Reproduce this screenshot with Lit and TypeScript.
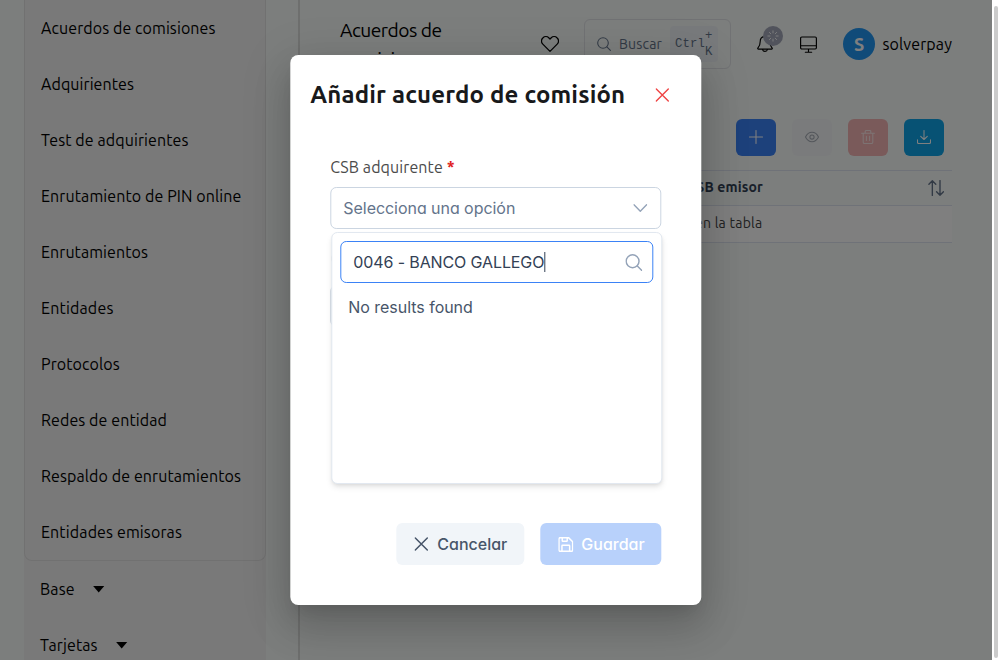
import { LitElement, html, css, svg } from "lit";
import { customElement, property } from "lit/decorators.js";

/* A one-line label that tracks its letters to fill a given width. */
@customElement("fit-label")
class FitLabel extends LitElement {
  @property({ type: Number }) width = 0;
  @property() text = "";
  static styles = css`
    :host { display: block; flex: none; white-space: nowrap; }
    .t { display: inline-block; white-space: pre; }
  `;
  firstUpdated() {
    const el = this.renderRoot.querySelector(".t") as HTMLElement;
    const w = el.getBoundingClientRect().width;
    if (w && this.width && Math.abs(this.width - w) > 0.4) {
      el.style.letterSpacing = `${(this.width - w) / this.text.length}px`;
    }
  }
  render() {
    return html`<span class="t">${this.text}</span>`;
  }
}

const fit = (text: string, width: number) =>
  html`<fit-label .text=${text} .width=${width}></fit-label>`;

const icons = {
  search: svg`<circle cx="6" cy="6" r="5.3"/><path d="M9.9 9.9 13.4 13.4"/>`,
  plus: svg`<path d="M7 .5v13M.5 7h13"/>`,
  eye: svg`<path d="M.5 7C2 4 4.4 2.3 7 2.3S12 4 13.5 7C12 10 9.6 11.7 7 11.7S2 10 .5 7Z"/><circle cx="7" cy="7" r="2.1"/>`,
  trash: svg`<path d="M.6 3.2h12.8M2.2 3.2v9.1c0 .7.5 1.2 1.2 1.2h7.2c.7 0 1.2-.5 1.2-1.2V3.2M4.2 3.2V1.4c0-.5.4-.9.9-.9h3.8c.5 0 .9.4.9.9v1.8M5.4 6.3v4.2M8.6 6.3v4.2"/>`,
  download: svg`<path d="M7 .5v9M3.7 6.3 7 9.5l3.3-3.2M.5 9.7v2.6c0 .7.6 1.2 1.2 1.2h10.6c.6 0 1.2-.5 1.2-1.2V9.7"/>`,
  times: svg`<path d="M1 1l12 12M13 1 1 13"/>`,
  save: svg`<path d="M.6 1.8C.6 1.1 1.1.6 1.8.6h7.7l3.9 3.9v7.7c0 .7-.5 1.2-1.2 1.2H1.8c-.7 0-1.2-.5-1.2-1.2ZM3.4 13.2V8.3c0-.4.2-.6.6-.6h6c.4 0 .6.2.6.6v4.9M3.7.8v2.6c0 .4.2.6.6.6h3.4c.4 0 .6-.2.6-.6V.8"/>`,
  chevron: svg`<path d="M.7 3.8 7 10.2l6.3-6.4"/>`,
  heart: svg`<path d="M7 12.7 1.4 7.1a3.3 3.3 0 0 1 0-4.8 3.4 3.4 0 0 1 4.8 0L7 3.1l.8-.8a3.4 3.4 0 0 1 4.8 0 3.3 3.3 0 0 1 0 4.8Z"/>`,
  bell: svg`<path d="M7 .5c-2.7 0-4.2 1.9-4.2 4.4C2.8 8.6 1.5 9.6.8 10.4c-.4.5-.1 1.1.5 1.1h11.4c.6 0 .9-.6.5-1.1-.7-.8-2-1.8-2-5.5C11.2 2.4 9.7.5 7 .5ZM4.8 11.6c.2 1.2 1 1.9 2.2 1.9s2-.7 2.2-1.9"/>`,
  desktop: svg`<path d="M1.5.8h11c.6 0 1 .4 1 1v7.9c0 .6-.4 1-1 1h-11c-.6 0-1-.4-1-1V1.8c0-.6.4-1 1-1ZM.5 8h13M7 10.7v2.7M4.4 13.4h5.2"/>`,
  sort: svg`<path d="M3.8 13.5V.7M.8 3.7l3-3 3 3M10.5.5v12.8M7.5 10.3l3 3 3-3"/>`,
  spinner: svg`<path d="M7 1v2.4M7 10.6V13M1 7h2.4M10.6 7H13M2.8 2.8l1.6 1.6M9.6 9.6l1.6 1.6M2.8 11.2l1.6-1.6M9.6 4.4l1.6-1.6"/>`,
};

const icon = (shape: unknown, size: number, stroke = 1.05) => html`<svg
  class="icon" width=${size} height=${size} viewBox="0 0 14 14" fill="none"
  stroke="currentColor" stroke-width=${stroke} stroke-linecap="round" stroke-linejoin="round">${shape}</svg>`;

const MENU: [string, number][] = [
  ["Acuerdos de comisiones", 174.5],
  ["Adquirientes", 93],
  ["Test de adquirientes", 147.5],
  ["Enrutamiento de PIN online", 200.5],
  ["Enrutamientos", 107],
  ["Entidades", 72.5],
  ["Protocolos", 78.7],
  ["Redes de entidad", 126],
  ["Respaldo de enrutamientos", 200],
  ["Entidades emisoras", 141],
];
const GROUPS: [string, number][] = [["Base", 34.7], ["Tarjetas", 57.7]];

@customElement("app-root")
class AppRoot extends LitElement {
  static styles = css`
    * { box-sizing: border-box; }
    :host {
      display: block; position: relative; width: 1000px; height: 660px; overflow: hidden;
      background: #fff; color: #000; font: 16px/24px Ubuntu, "Noto Sans", sans-serif;
    }
    .icon { display: block; flex: none; }
    .page { display: flex; width: 992px; height: 660px; background: #f8fcfa; }
    .side { width: 300px; height: 660px; padding-left: 24px; border-right: 2px solid #dcdedd; overflow: hidden; }
    .nav { width: 242px; height: 660px; background: #f3f3f3; }
    .menu { height: 561px; border: 1px solid #e2e2e2; border-top: 0; border-radius: 0 0 8px 8px; }
    .item { display: flex; align-items: center; height: 56px; padding-left: 16px; }
    .group { display: flex; align-items: center; gap: 18px; height: 56px; padding-left: 16px; }
    .caret { width: 12px; height: 7px; background: #000; clip-path: polygon(0 0, 100% 0, 50% 100%); }
    .main { width: 652px; margin-left: 40px; }
    .head { display: flex; align-items: center; height: 88px; width: 612px; }
    .title { flex: none; width: 201px; height: 56px; font-size: 19.2px; line-height: 29px; }
    .find {
      display: flex; flex: none; align-items: center; width: 147px; height: 50px; margin-left: 25px; padding-left: 12px;
      border: 1px solid #e2e4e8; border-radius: 6px; color: #64748b; font-size: 14px;
    }
    .find fit-label { margin-left: 8px; }
    .kbd {
      display: flex; width: 48px; height: 36px; margin-left: 8px; padding-left: 5px; border-radius: 4px;
      background: #f1f5f9; font: 12.25px/16px "Liberation Mono", monospace; align-items: center;
    }
    .kbd fit-label { margin: 0; }
    .keys { display: grid; justify-items: center; }
    .bell { position: relative; flex: none; margin-left: 26px; }
    .badge {
      position: absolute; left: 6px; top: -10px; width: 20px; height: 20px; border-radius: 50%;
      background: #a2a7b8; color: #fff; display: grid; place-items: center;
    }
    .desk { flex: none; margin-left: 27px; }
    .avatar {
      display: grid; place-items: center; width: 32px; height: 32px; margin: 0 7.5px 0 26px; border-radius: 50%;
      background: #2196f3; color: #fff; font-size: 18px; font-weight: 700; flex: none;
    }
    .tools { display: flex; justify-content: flex-end; gap: 16px; width: 604px; margin-top: 31px; }
    .tool { display: grid; justify-items: center; padding-top: 11px; width: 40px; height: 37px; border-radius: 6px; color: #fff; }
    .add { background: #3b82f6; }
    .see { background: #f5f7f9; color: #a7adb6; }
    .del { background: #f4b5b5; color: #fbe6e6; }
    .get { background: #0ea5e9; }
    .table { width: 612px; margin-top: 14px; border-top: 1px solid #dfe4f0; font-size: 14px; }
    .th {
      display: flex; align-items: center; justify-content: flex-end; height: 35px; padding: 0 8px 1px 0;
      border-bottom: 1px solid #dfe4f0; color: #334155; font-weight: 700;
    }
    .th fit-label { margin-bottom: 1px; }
    .th .icon { margin-left: 165px; color: #64748b; }
    .td {
      display: flex; align-items: center; justify-content: center; height: 37px; padding-bottom: 2px; background: #fff;
      border-bottom: 1px solid #dfe4f0; color: #444;
    }
    .mask { position: absolute; left: 0; top: 0; width: 992px; height: 660px; background: rgba(0, 0, 0, .5); overflow: hidden; }
    .dialog {
      position: absolute; left: 290px; top: 55px; width: 411px; height: 550px; padding: 0 40px; border-radius: 8px;
      background: #fff; color: #334155; transform: translateX(.3px);
      box-shadow: 0 11px 15px -7px rgba(0,0,0,.1), 0 24px 38px 3px rgba(0,0,0,.12), 0 9px 46px 8px rgba(0,0,0,.1);
    }
    .caption { display: flex; align-items: center; justify-content: space-between; height: 80px; margin: 0 -7.500px 0 -20px; color: #18191b; font-size: 24px; line-height: 32px; font-weight: 700; }
    .close { color: #ef4444; }
    .label { display: flex; gap: 4px; margin-top: 20px; color: #4b4b4b; }
    .star { color: #e02020; font-weight: 700; }
    .inter { font-family: Inter, sans-serif; font-size: 16px; font-feature-settings: "cv11"; }
    .select {
      display: flex; align-items: center; justify-content: space-between; width: 331px; height: 42px; margin-top: 8px;
      padding: 0 13px 0 12px; border: 1px solid #cbd5e1; border-radius: 6px; color: #64748b;
    }
    .chev { color: #94a3b8; }
    .edge { width: 4px; height: 7px; margin: 26px 0 0 .6px; border-left: 1px solid #b5b5b5; border-radius: 2px; }
    .blank { height: 42px; margin-top: 23px; border: 1px solid #cbd5e1; border-radius: 6px; }
    .panel {
      position: absolute; left: 41px; top: 177px; width: 331px; height: 252px; padding: 8px; background: #fff;
      border: 1px solid #e2e8f0; border-radius: 6px;
      box-shadow: 0 4px 6px -1px rgba(0,0,0,.1), 0 2px 4px -2px rgba(0,0,0,.1);
    }
    .filter {
      display: flex; align-items: center; width: 313px; height: 42px; padding: 0 10.500px 0 12px;
      border: 1px solid #3b82f6; border-radius: 6px; color: #334155;
    }
    .cursor { width: 1px; height: 20px; background: #334155; }
    .filter .icon { margin-left: auto; color: #94a3b8; }
    .none { margin: 12px 0 0 8px; color: #475569; }
    .foot { display: flex; justify-content: flex-end; gap: 16px; margin-top: 196px; font-weight: 500; }
    .btn { display: flex; align-items: center; height: 42px; border-radius: 6px; }
    .cancel { width: 128px; padding-left: 18px; gap: 9px; background: #f1f5f9; color: #475569; }
    .save { width: 121px; padding-left: 17.5px; gap: 8.500px; background: #b8d1fb; color: #fff; }
    .bar { position: absolute; left: 994px; top: 6px; width: 4px; height: 652px; border-radius: 2px; background: #cbcbcb; }
  `;

  render() {
    return html`
      <div class="page">
        <div class="side"><div class="nav">
          <div class="menu">${MENU.map(([t, w]) => html`<div class="item">${fit(t, w)}</div>`)}</div>
          ${GROUPS.map(([t, w]) => html`<div class="group">${fit(t, w)}<i class="caret"></i></div>`)}
        </div></div>
        <div class="main">
          <div class="head">
            <div class="title">${fit("Acuerdos de", 101.5)}${fit("comisiones", 97)}</div>
            ${icon(icons.heart, 18, 0.95)}
            <div class="find">
              ${icon(icons.search, 14)}${fit("Buscar", 43)}
              <div class="kbd">${fit("Ctrl", 30)}<div class="keys"><span>+</span><span>K</span></div></div>
            </div>
            <div class="bell">${icon(icons.bell, 16, 1)}<span class="badge">${icon(icons.spinner, 12)}</span></div>
            <div class="desk">${icon(icons.desktop, 17, 0.95)}</div>
            <div class="avatar">S</div>
            ${fit("solverpay", 69.5)}
          </div>
          <div class="tools">
            <div class="tool add">${icon(icons.plus, 14)}</div>
            <div class="tool see">${icon(icons.eye, 14)}</div>
            <div class="tool del">${icon(icons.trash, 14)}</div>
            <div class="tool get">${icon(icons.download, 14)}</div>
          </div>
          <div class="table">
            <div class="th">${fit("CSB emisor", 76)}${icon(icons.sort, 16, 1.2)}</div>
            <div class="td">${fit("No hay datos disponibles en la tabla", 233)}</div>
          </div>
        </div>
      </div>
      <div class="mask">
        <div class="dialog">
          <div class="caption">${fit("Añadir acuerdo de comisión", 315)}<span class="close">${icon(icons.times, 14, 1.4)}</span></div>
          <div class="label">${fit("CSB adquirente", 112.5)}<span class="star">*</span></div>
          <div class="select inter">${fit("Selecciona una opción", 172)}<span class="chev">${icon(icons.chevron, 14, 1.4)}</span></div>
          <div class="edge"></div>
          <div class="blank"></div>
          <div class="panel inter">
            <div class="filter">${fit("0046 - BANCO GALLEGO", 191)}<i class="cursor"></i>${icon(icons.search, 17, 1.2)}</div>
            <div class="none">${fit("No results found", 124.5)}</div>
          </div>
          <div class="foot inter">
            <div class="btn cancel">${icon(icons.times, 14, 1.5)}${fit("Cancelar", 70)}</div>
            <div class="btn save">${icon(icons.save, 15, 1.4)}${fit("Guardar", 63)}</div>
          </div>
        </div>
      </div>
      <div class="bar"></div>`;
  }
}
